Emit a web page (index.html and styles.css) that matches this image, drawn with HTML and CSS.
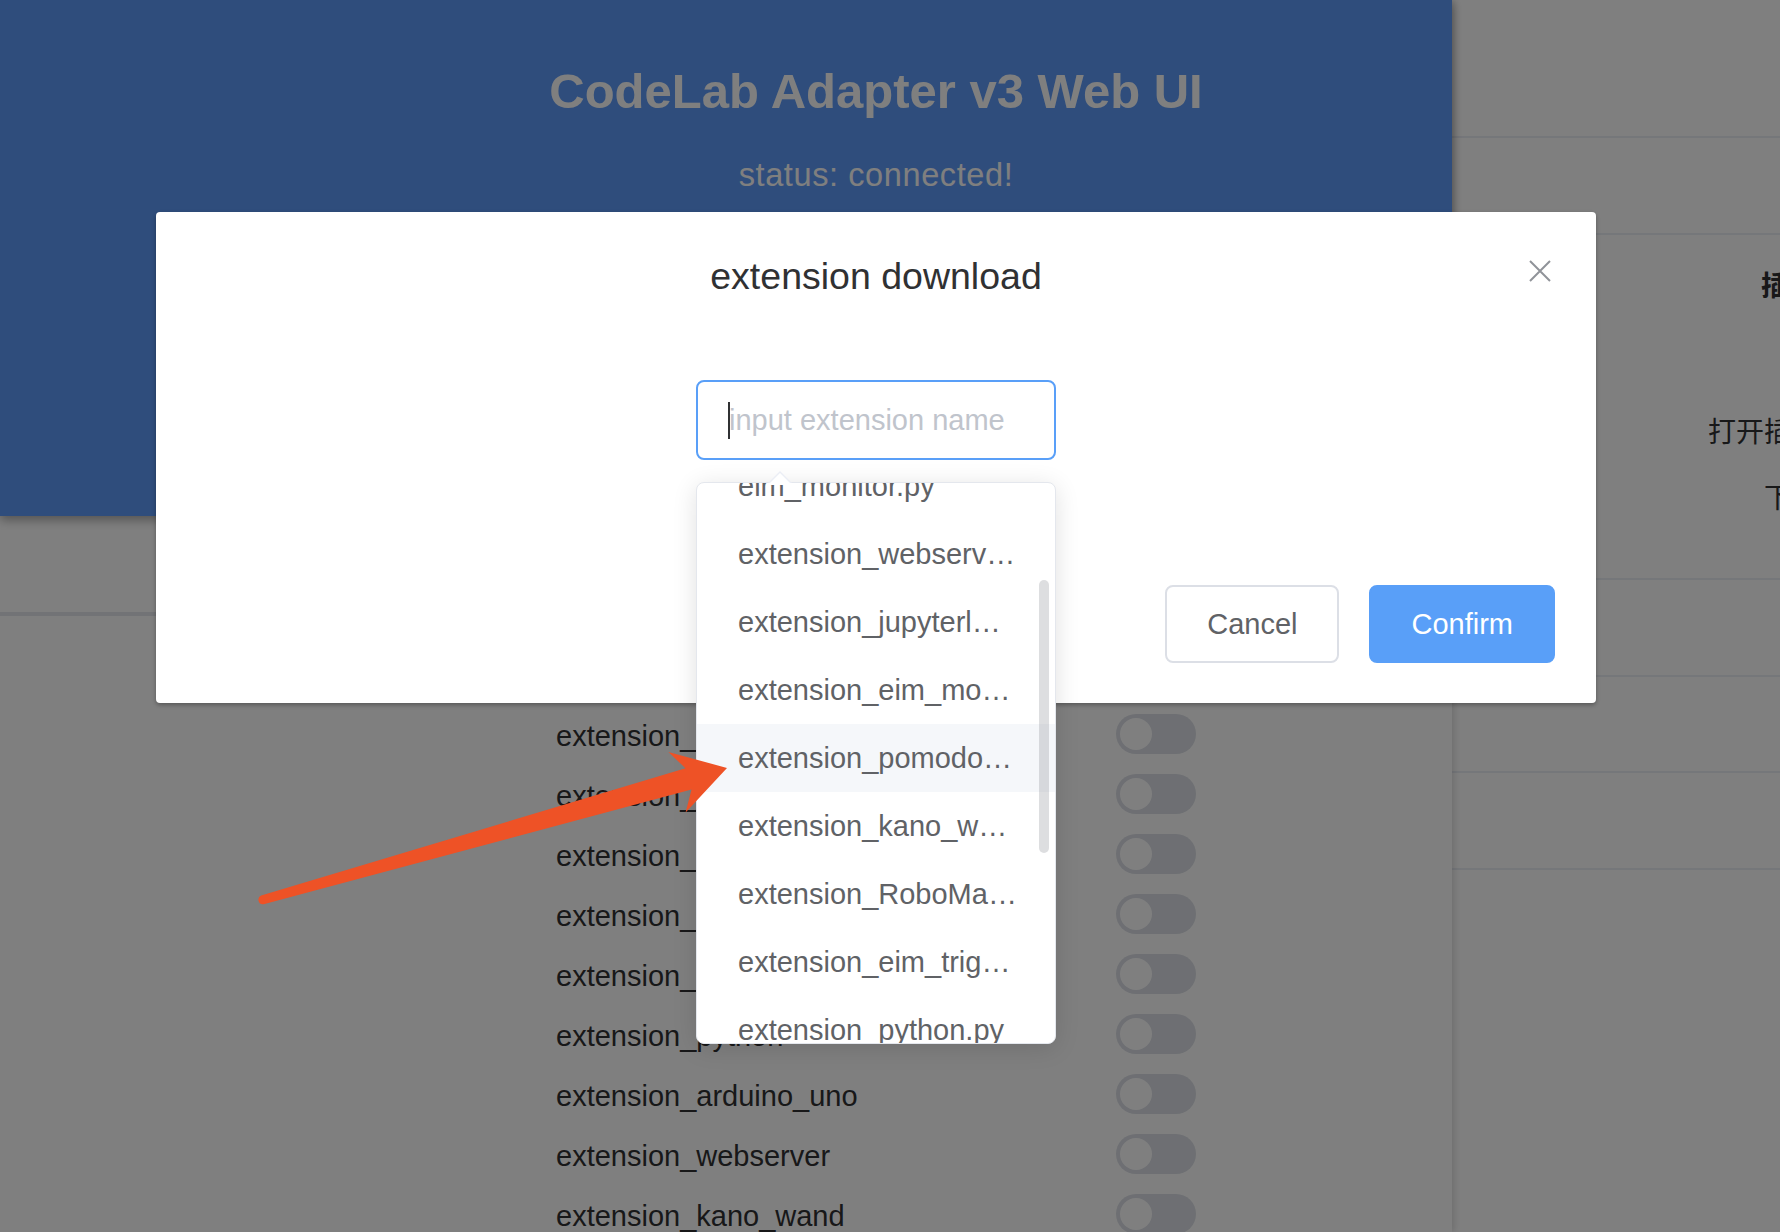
FILE: index.html
```html
<!DOCTYPE html>
<html lang="en">
<head>
<meta charset="utf-8">
<title>CodeLab Adapter v3 Web UI</title>
<link rel="stylesheet" href="styles.css">
</head>
<body>
<div class="page">
  <div class="main">
    <header class="hero">
      <h1>CodeLab Adapter v3 Web UI</h1>
      <p class="status">status: connected!</p>
    </header>
    <div class="tabs"></div>
    <ul class="ext-list">
      <li class="ext-row"><span class="ext-name">extension_eim_monitor</span><span class="switch"><span class="knob"></span></span></li>
      <li class="ext-row"><span class="ext-name">extension_jupyterlab</span><span class="switch"><span class="knob"></span></span></li>
      <li class="ext-row"><span class="ext-name">extension_eim_trigger</span><span class="switch"><span class="knob"></span></span></li>
      <li class="ext-row"><span class="ext-name">extension_RoboMaster</span><span class="switch"><span class="knob"></span></span></li>
      <li class="ext-row"><span class="ext-name">extension_pomodoro</span><span class="switch"><span class="knob"></span></span></li>
      <li class="ext-row"><span class="ext-name">extension_python</span><span class="switch"><span class="knob"></span></span></li>
      <li class="ext-row"><span class="ext-name">extension_arduino_uno</span><span class="switch"><span class="knob"></span></span></li>
      <li class="ext-row"><span class="ext-name">extension_webserver</span><span class="switch"><span class="knob"></span></span></li>
      <li class="ext-row"><span class="ext-name">extension_kano_wand</span><span class="switch"><span class="knob"></span></span></li>
    </ul>
  </div>
  <aside class="side">
    <div class="side-row r1"></div>
    <div class="side-row r2"></div>
    <div class="side-row r3">
      <span class="side-text t1">插件管理</span>
      <span class="side-text t2">打开插件目录</span>
      <span class="side-text t3">下载插件</span>
    </div>
    <div class="side-row r4"></div>
    <div class="side-row r5"></div>
    <div class="side-row r6"></div>
  </aside>
</div>

<div class="mask"></div>

<div class="dialog">
  <div class="dialog-header">
    <span class="dialog-title">extension download</span>
    <svg class="close" viewBox="0 0 22 22"><path d="M1 1 L21 21 M21 1 L1 21" stroke="#909399" stroke-width="2" fill="none"/></svg>
  </div>
  <div class="dialog-body">
    <div class="input"><span class="caret"></span><span class="placeholder">input extension name</span></div>
  </div>
  <div class="dialog-footer">
    <button class="btn">Cancel</button>
    <button class="btn btn-primary">Confirm</button>
  </div>
</div>

<div class="suggest">
  <div class="suggest-wrap">
    <ul class="suggest-list">
      <li class="suggest-item">eim_monitor.py</li>
      <li class="suggest-item">extension_webserv…</li>
      <li class="suggest-item">extension_jupyterl…</li>
      <li class="suggest-item">extension_eim_mo…</li>
      <li class="suggest-item hover">extension_pomodo…</li>
      <li class="suggest-item">extension_kano_w…</li>
      <li class="suggest-item">extension_RoboMa…</li>
      <li class="suggest-item">extension_eim_trig…</li>
      <li class="suggest-item">extension_python.py</li>
    </ul>
    <span class="thumb"></span>
  </div>
</div>

<svg class="annot" width="1780" height="1232" viewBox="0 0 1780 1232">
  <path d="M727 768 L668.4 751.9 L685.5 768.3 L261.2 895.6 A4.5 4.5 0 0 0 263.6 904.2 L691.5 789.5 L685.6 812.5 Z" fill="#ee5226"/>
</svg>
</body>
</html>
```

FILE: styles.css
```css
* { box-sizing: border-box; }
html, body { margin: 0; padding: 0; }
body {
  width: 1780px;
  height: 1232px;
  overflow: hidden;
  position: relative;
  background: #fff;
  font-family: "Liberation Sans", Arial, "Noto Sans CJK SC", sans-serif;
}

.page { display: flex; height: 1232px; }

.main {
  width: 1452px;
  flex: none;
  background: #fff;
  position: relative;
  z-index: 1;
  box-shadow: 3px 0 6px rgba(0, 0, 0, 0.12);
}

.hero {
  height: 516px;
  background: #5e9af8;
  color: #fff;
  text-align: center;
  padding: 63px 0 0 300px;
  box-shadow: 0 4px 10px rgba(0, 0, 0, 0.35);
  position: relative;
}
.hero h1 {
  margin: 0;
  font-size: 49px;
  line-height: 56px;
  font-weight: 700;
}
.status {
  margin: 36px 0 0;
  font-size: 32.5px;
  line-height: 40px;
  letter-spacing: 0.6px;
}

.tabs {
  height: 100px;
  border-bottom: 4px solid #e4e7ed;
}

.ext-list {
  list-style: none;
  margin: 0;
  padding: 90px 0 0 556px;
}
.ext-row {
  display: flex;
  align-items: center;
  height: 60px;
}
.ext-name {
  width: 560px;
  font-size: 29px;
  color: #303133;
  white-space: nowrap;
}
.switch {
  width: 80px;
  height: 40px;
  border-radius: 20px;
  background: #dcdfe6;
  padding: 4px;
  margin-top: -4px;
  display: flex;
}
.knob {
  width: 32px;
  height: 32px;
  border-radius: 50%;
  background: #fff;
}

.side {
  flex: 1;
  min-width: 0;
  background: #fff;
  white-space: nowrap;
}
.side-row { border-bottom: 2px solid #ebeef5; }
.r1 { height: 138px; }
.r2 { height: 97px; }
.r3 {
  height: 345px;
  display: flex;
  flex-direction: column;
  align-items: flex-start;
  padding-top: 29px;
}
.r4 { height: 97px; }
.r5 { height: 96px; }
.r6 { height: 97px; }
.side-text {
  font-family: "Noto Sans CJK SC", sans-serif;
  font-size: 28px;
  line-height: 40px;
  color: #303133;
}
.t1 { font-weight: 700; margin-left: 309px; }
.t2 { margin-left: 256px; margin-top: 106px; }
.t3 { margin-left: 312px; margin-top: 26px; }

.mask {
  position: absolute;
  left: 0;
  top: 0;
  width: 1780px;
  height: 1232px;
  background: rgba(0, 0, 0, 0.5);
  z-index: 10;
}

.dialog {
  position: absolute;
  left: 156px;
  top: 212px;
  width: 1440px;
  background: #fff;
  border-radius: 4px;
  box-shadow: 0 2px 4px rgba(0, 0, 0, 0.3);
  z-index: 20;
}
.dialog-header {
  padding: 40px 40px 20px;
  text-align: center;
  position: relative;
}
.dialog-title {
  font-size: 37.5px;
  line-height: 48px;
  color: #303133;
}
.close {
  position: absolute;
  top: 48px;
  right: 45px;
  width: 22px;
  height: 22px;
}
.dialog-body { padding: 60px 40px; }
.input {
  width: 360px;
  height: 80px;
  margin: 0 auto;
  border: 2px solid #599ff8;
  border-radius: 8px;
  padding-left: 30px;
  display: flex;
  align-items: center;
  font-size: 29px;
  color: #c0c4cc;
  white-space: nowrap;
}
.caret {
  width: 2px;
  height: 37px;
  background: #303133;
  margin-right: -1px;
  flex: none;
}
.dialog-footer {
  padding: 65px 41px 40px;
  display: flex;
  justify-content: flex-end;
  gap: 30px;
}
.btn {
  height: 78px;
  padding: 0 40px;
  border: 2px solid #dcdfe6;
  border-radius: 8px;
  background: #fff;
  color: #606266;
  font-family: inherit;
  font-size: 29px;
  display: flex;
  align-items: center;
}
.btn-primary {
  background: #599ff8;
  border-color: #599ff8;
  color: #fff;
}

.suggest {
  position: absolute;
  left: 696px;
  top: 482px;
  width: 360px;
  height: 562px;
  background: #fff;
  border: 1px solid #e4e7ed;
  border-radius: 8px;
  box-shadow: 0 4px 24px rgba(0, 0, 0, 0.12);
  z-index: 30;
}
.suggest::before,
.suggest::after {
  content: "";
  position: absolute;
  left: 71px;
  border-style: solid;
  border-color: transparent;
  border-width: 0 12px 12px;
}
.suggest::before { top: -12px; border-bottom-color: #ebeef5; }
.suggest::after { top: -10px; border-bottom-color: #fff; }
.suggest-wrap {
  height: 100%;
  overflow: hidden;
  border-radius: 8px;
  position: relative;
}
.suggest-list {
  list-style: none;
  margin: -31px 0 0;
  padding: 0;
}
.suggest-item {
  height: 68px;
  line-height: 68px;
  padding: 0 20px 0 41px;
  font-size: 29px;
  color: #606266;
  white-space: nowrap;
  overflow: hidden;
}
.suggest-item.hover { background: #f5f7fa; }
.thumb {
  position: absolute;
  right: 6px;
  top: 97px;
  width: 10px;
  height: 273px;
  border-radius: 5px;
  background: rgba(144, 147, 153, 0.3);
}

.annot {
  position: absolute;
  left: 0;
  top: 0;
  z-index: 40;
  pointer-events: none;
}
```
